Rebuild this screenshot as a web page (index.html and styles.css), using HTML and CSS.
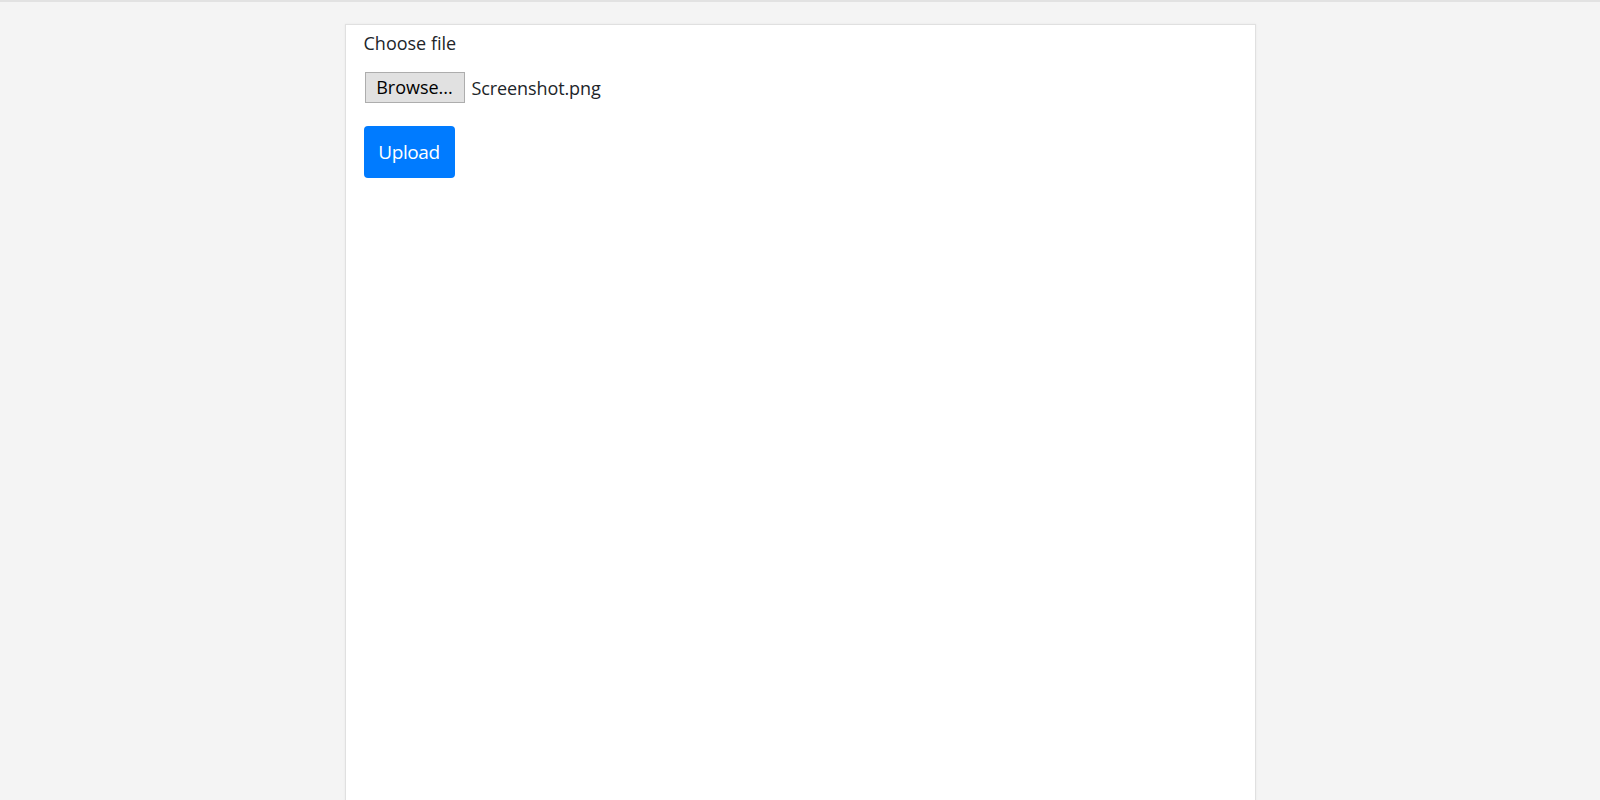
FILE: index.html
```html
<!DOCTYPE html>
<html lang="en">
<head>
    <meta charset="UTF-8">
    <meta name="viewport" content="width=device-width, initial-scale=1.0">
    <title>Upload</title>
    <link rel="stylesheet" href="styles.css">
</head>
<body>
    <div class="topline"></div>
    <div class="container">
        <form class="upload-form">
            <label class="form-label">Choose file</label>
            <div class="file-row">
                <span class="browse-btn">Browse...</span>
                <span class="file-name">Screenshot.png</span>
            </div>
            <button type="button" class="btn">Upload</button>
        </form>
    </div>
</body>
</html>
```

FILE: styles.css
```css
html, body {
    height: 100%;
}
body {
    font-family: "Open Sans", "Noto Sans", Arial, sans-serif;
    margin: 0;
    padding: 0;
    background: #f4f4f4;
    color: #212529;
    overflow: hidden;
}
.topline {
    height: 2px;
    background: #e2e2e2;
}
.container {
    width: 873px;
    margin: 22px auto 0;
    padding: 0 18px;
    background: #fff;
    border: 1px solid #e0e0e0;
    height: 800px;
    box-shadow: 0 0 2px rgba(0, 0, 0, 0.06);
}
.upload-form {
    display: flex;
    flex-direction: column;
    align-items: flex-start;
}
.form-label {
    font-size: 18px;
    line-height: 24px;
    margin-top: 6px;
}
.file-row {
    display: flex;
    align-items: center;
    margin-top: 17px;
}
.browse-btn {
    display: block;
    width: 98px;
    height: 29px;
    line-height: 29px;
    margin-left: 1px;
    text-align: center;
    background: #e1e1e1;
    border: 1px solid #adadad;
    color: #000;
    font-size: 18px;
}
.file-name {
    margin-left: 7px;
    font-size: 18px;
    letter-spacing: -0.1px;
}
.btn {
    margin-top: 23px;
    width: 91px;
    height: 52px;
    background: #007bff;
    color: #fff;
    border: none;
    border-radius: 4px;
    font-family: inherit;
    font-size: 19px;
    letter-spacing: -0.4px;
    padding: 0;
}
```
